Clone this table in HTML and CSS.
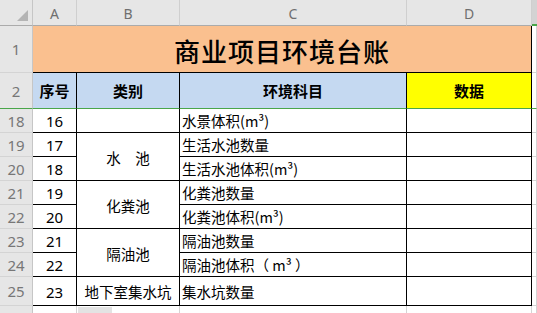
FILE: index.html
```html
<!DOCTYPE html>
<html lang="zh">
<head>
<meta charset="utf-8">
<link rel="stylesheet" href="styles.css">
</head>
<body>
<div class="sheet">
  <div class="ch corner"><span class="tri"></span></div>
  <div class="ch">A</div>
  <div class="ch">B</div>
  <div class="ch">C</div>
  <div class="ch">D</div>
  <div class="ch sel"></div>

  <div class="rh">1</div>
  <div class="title">商业项目环境台账</div>
  <div class="gc"></div>

  <div class="rh r2">2</div>
  <div class="hd r2">序号</div>
  <div class="hd r2">类别</div>
  <div class="hd r2">环境科目</div>
  <div class="hd r2 yellow">数据</div>
  <div class="gc r2"></div>

  <div class="rh">18</div>
  <div class="c num">16</div>
  <div class="c"></div>
  <div class="c txt">水景体积(m³)</div>
  <div class="c"></div>
  <div class="gc"></div>

  <div class="rh">19</div>
  <div class="c num">17</div>
  <div class="c cat span2">水　池</div>
  <div class="c txt">生活水池数量</div>
  <div class="c"></div>
  <div class="gc"></div>

  <div class="rh">20</div>
  <div class="c num">18</div>
  <div class="c txt">生活水池体积(m³)</div>
  <div class="c"></div>
  <div class="gc"></div>

  <div class="rh">21</div>
  <div class="c num">19</div>
  <div class="c cat span2">化粪池</div>
  <div class="c txt">化粪池数量</div>
  <div class="c"></div>
  <div class="gc"></div>

  <div class="rh">22</div>
  <div class="c num">20</div>
  <div class="c txt">化粪池体积(m³)</div>
  <div class="c"></div>
  <div class="gc"></div>

  <div class="rh">23</div>
  <div class="c num">21</div>
  <div class="c cat span2">隔油池</div>
  <div class="c txt">隔油池数量</div>
  <div class="c"></div>
  <div class="gc"></div>

  <div class="rh">24</div>
  <div class="c num">22</div>
  <div class="c txt">隔油池体积（ m³ ）</div>
  <div class="c"></div>
  <div class="gc"></div>

  <div class="rh">25</div>
  <div class="c num">23</div>
  <div class="c cat">地下室集水坑</div>
  <div class="c txt">集水坑数量</div>
  <div class="c"></div>
  <div class="gc"></div>

  <div class="rh">26</div>
  <div class="gc"></div>
  <div class="gc"><span class="blk"></span></div>
  <div class="gc"></div>
  <div class="gc"></div>
  <div class="gc"></div>
</div>
</body>
</html>
```

FILE: styles.css
```css
html, body {
  margin: 0;
  padding: 0;
  background: #ffffff;
  overflow: hidden;
}

.sheet {
  width: 537px;
  height: 313px;
  overflow: hidden;
  display: grid;
  grid-template-columns: 33px 44px 103px 227px 125px 1fr;
  grid-template-rows: 26px 47px 36px repeat(7, 24px) 29px 24px;
  font-family: "Noto Sans CJK SC", "Noto Sans", sans-serif;
  color: #000;
}

.sheet > div {
  box-sizing: border-box;
  display: flex;
  align-items: center;
  justify-content: center;
  white-space: nowrap;
  overflow: hidden;
}

.ch {
  background: #e6e6e6;
  border-right: 1px solid #cfcfcf;
  border-bottom: 1px solid #ababab;
  color: #6f6f6f;
  font-family: "Noto Sans", sans-serif;
  font-size: 14px;
  padding-top: 1px;
}

.corner {
  position: relative;
  border-right-color: #c6c6c6;
}

.tri {
  position: absolute;
  right: 4px;
  bottom: 4px;
  width: 0;
  height: 0;
  border-left: 11px solid transparent;
  border-bottom: 11px solid #b4b4b4;
}

.sel {
  background: #d3d3d3;
  border-bottom: 2px solid #4aa64a;
  border-right: none;
}

.rh {
  background: #e6e6e6;
  border-right: 1px solid #c6c6c6;
  border-bottom: 1px solid #d4d4d4;
  color: #777;
  font-family: "Noto Sans", sans-serif;
  font-size: 15px;
}

.title {
  grid-column: span 4;
  background: #fac08f;
  border-right: 1px solid #000;
  border-bottom: 1px solid #000;
  font-size: 26px;
  font-weight: 500;
  letter-spacing: 1px;
  padding-top: 2px;
}

.gc {
  background: #fff;
  border-bottom: 1px solid #d4d4d4;
  border-right: 1px solid #d4d4d4;
}

.hd {
  background: #c5d9f1;
  border-right: 1px solid #000;
  font-size: 15px;
  font-weight: 700;
}

.yellow {
  background: #ffff00;
}

.sheet > .r2 {
  border-bottom: 1px solid #4aa64a;
}

.c {
  border-right: 1px solid #000;
  border-bottom: 1px solid #000;
  font-size: 14.5px;
  background: #fff;
}

.num {
  font-family: "Noto Sans", sans-serif;
  font-size: 15px;
  padding-top: 1px;
}

.sheet > .txt {
  justify-content: flex-start;
  padding-left: 2px;
}

.span2 {
  grid-row: span 2;
}

.cat {
  padding-top: 1px;
}

.sheet > .gc:has(.blk) {
  align-items: flex-start;
  justify-content: flex-start;
}

.blk {
  display: block;
  width: 34px;
  height: 10px;
  margin-top: 1px;
  margin-left: 1px;
  background: #e3e3e3;
}
```
